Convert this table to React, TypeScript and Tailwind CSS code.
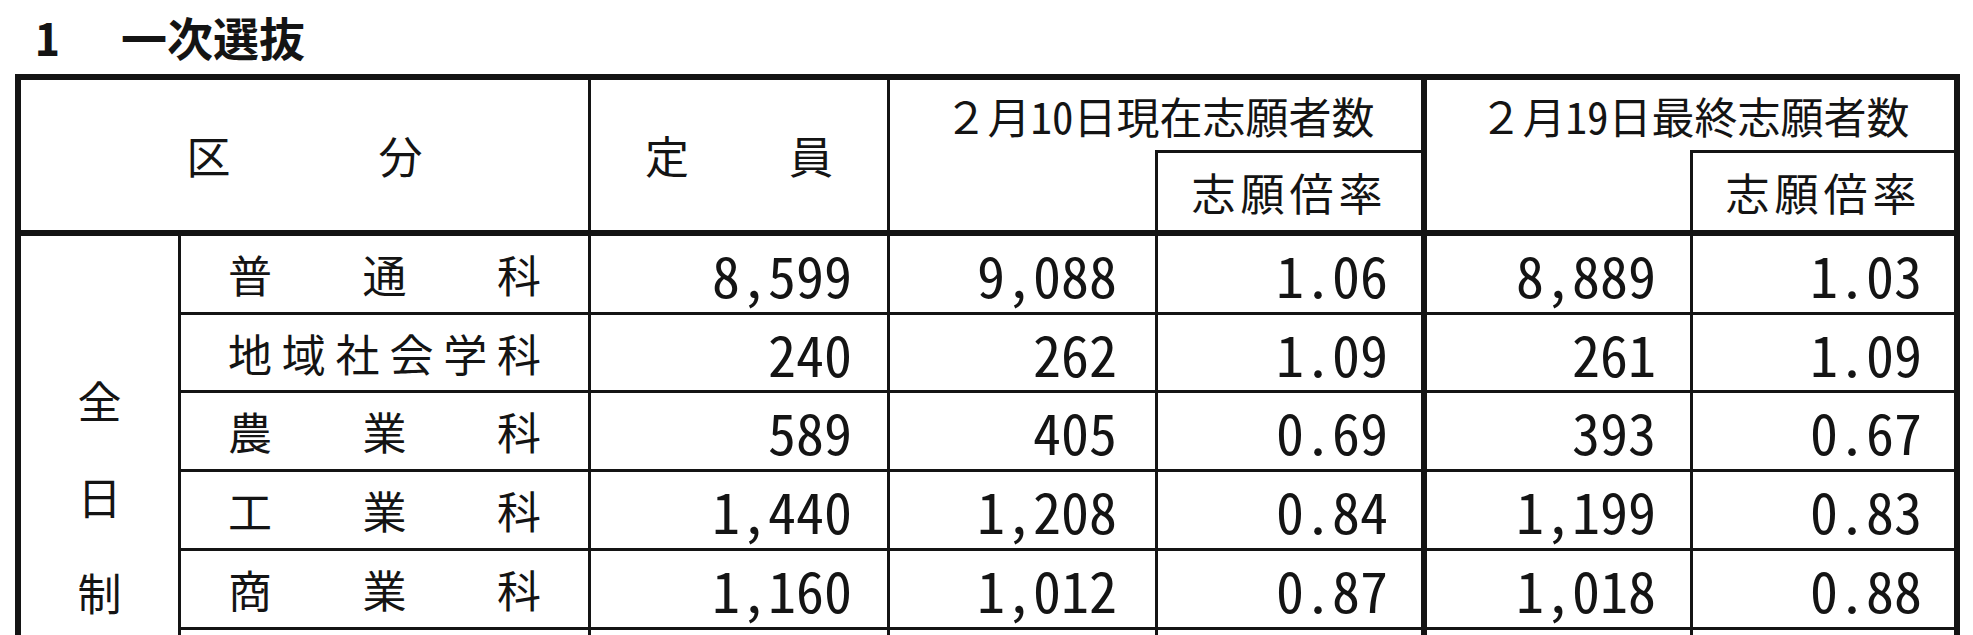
import React from 'react';

const jp = "font-['Noto_Sans_CJK_JP','Noto_Sans_CJK_SC',sans-serif]";
const hw = "[font-feature-settings:'hwid']";

const rows = [
  { label: '普通科', h: 'h-[79px]', v: ['8,599', '9,088', '1.06', '8,889', '1.03'] },
  { label: '地域社会学科', h: 'h-[78px]', v: ['240', '262', '1.09', '261', '1.09'] },
  { label: '農業科', h: 'h-[79px]', v: ['589', '405', '0.69', '393', '0.67'] },
  { label: '工業科', h: 'h-[79px]', v: ['1,440', '1,208', '0.84', '1,199', '0.83'] },
  { label: '商業科', h: 'h-[79px]', v: ['1,160', '1,012', '0.87', '1,018', '0.88'] },
];

const Num = ({ children }: { children: React.ReactNode }) => (
  <span className={`text-[56px] leading-none ${hw}`}>{children}</span>
);

const App: React.FC = () => {
  return (
    <div className={`h-[635px] overflow-hidden bg-white text-[#141414] ${jp}`}>
      {/* 見出し */}
      <div className="flex items-start pt-[13px] pl-[36px] text-[46px] font-bold leading-none">
        <span className={hw}>1</span>
        <span className="ml-[62px]">一次選抜</span>
      </div>

      <div className="ml-[15px] mt-[15px] w-[1945px] border-[6px] border-[#141414]">
        {/* ヘッダー */}
        <div className="flex h-[156px] border-b-[6px] border-[#141414] text-[44px] leading-none">
          <div className="flex w-[567px] items-center justify-center gap-[148px]">
            <span>区</span>
            <span>分</span>
          </div>
          <div className="flex w-[299px] items-center justify-center gap-[100px] border-l-[3px] border-[#141414]">
            <span>定</span>
            <span>員</span>
          </div>
          <div className="flex w-[534px] flex-col border-l-[3px] border-[#141414]">
            <div className="flex h-[70px] items-center justify-center pl-[8px] text-[43px]">
              ２月<span className={hw}>10</span>日現在志願者数
            </div>
            <div className="flex h-[80px]">
              <div className="w-[265px]" />
              <div className="flex flex-1 items-center justify-center border-l-[3px] border-t-[3px] border-[#141414] tracking-[5px]">
                志願倍率
              </div>
            </div>
          </div>
          <div className="flex flex-1 flex-col border-l-[6px] border-[#141414]">
            <div className="flex h-[70px] items-center justify-center pl-[8px] text-[43px]">
              ２月<span className={hw}>19</span>日最終志願者数
            </div>
            <div className="flex h-[80px]">
              <div className="w-[263px]" />
              <div className="flex flex-1 items-center justify-center border-l-[3px] border-t-[3px] border-[#141414] tracking-[5px]">
                志願倍率
              </div>
            </div>
          </div>
        </div>

        {/* 本体 */}
        <div className="flex">
          <div className="flex w-[157px] flex-col items-center gap-[52px] pt-[142px] text-[44px] leading-none">
            <span>全</span>
            <span>日</span>
            <span>制</span>
          </div>
          <div className="flex-1 border-l-[3px] border-[#141414]">
            {rows.map((r) => (
              <div key={r.label} className={`flex ${r.h} border-b-[3px] border-[#141414]`}>
                <div className="flex w-[407px] items-center justify-between px-[47px] text-[44px] leading-none">
                  {r.label.split('').map((c, i) => (
                    <span key={i}>{c}</span>
                  ))}
                </div>
                <div className="flex w-[299px] items-center justify-end border-l-[3px] border-[#141414] pr-[35px]">
                  <Num>{r.v[0]}</Num>
                </div>
                <div className="flex w-[268px] items-center justify-end border-l-[3px] border-[#141414] pr-[38px]">
                  <Num>{r.v[1]}</Num>
                </div>
                <div className="flex w-[266px] items-center justify-end border-l-[3px] border-[#141414] pr-[33px]">
                  <Num>{r.v[2]}</Num>
                </div>
                <div className="flex w-[269px] items-center justify-end border-l-[6px] border-[#141414] pr-[34px]">
                  <Num>{r.v[3]}</Num>
                </div>
                <div className="flex flex-1 items-center justify-end border-l-[3px] border-[#141414] pr-[32px]">
                  <Num>{r.v[4]}</Num>
                </div>
              </div>
            ))}
            <div className="flex h-[79px]">
              <div className="w-[407px]" />
              <div className="w-[299px] border-l-[3px] border-[#141414]" />
              <div className="w-[268px] border-l-[3px] border-[#141414]" />
              <div className="w-[266px] border-l-[3px] border-[#141414]" />
              <div className="w-[269px] border-l-[6px] border-[#141414]" />
              <div className="flex-1 border-l-[3px] border-[#141414]" />
            </div>
          </div>
        </div>
      </div>
    </div>
  );
};

export default App;
